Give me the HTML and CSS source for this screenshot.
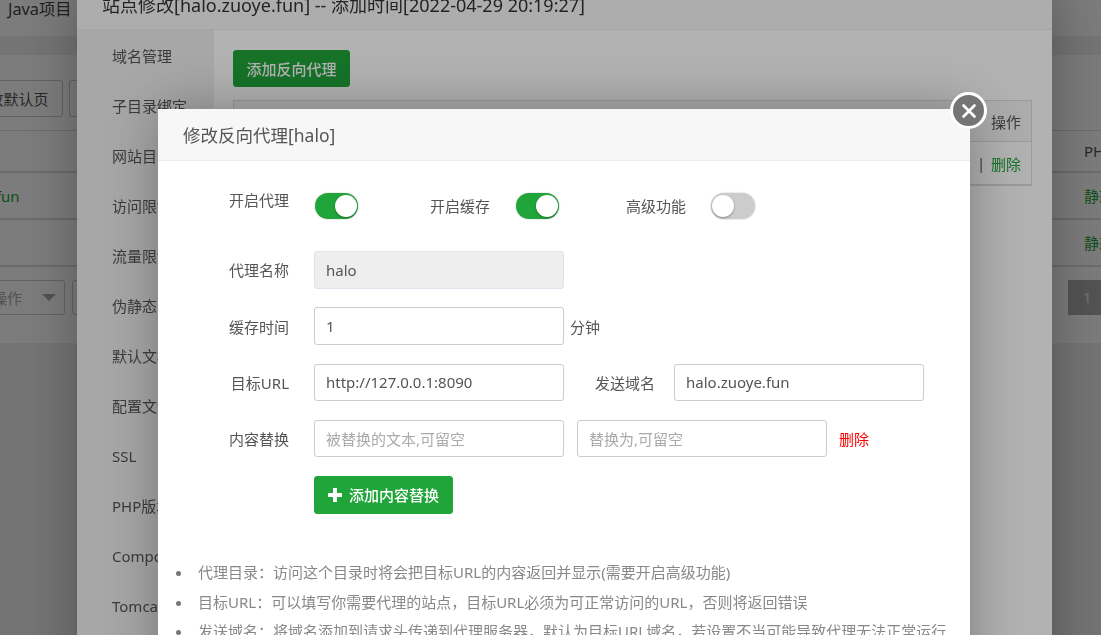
FILE: index.html
```html
<!DOCTYPE html>
<html lang="zh-CN">
<head>
<meta charset="utf-8">
<title>修改反向代理</title>
<link rel="stylesheet" href="styles.css">
</head>
<body>
<div class="page">
  <nav class="topnav"><span>Java项目</span></nav>
  <main class="card">
    <div class="toolbar">
      <button class="btn btn-first">修改默认页</button>
      <button class="btn btn-next"></button>
    </div>
    <div class="row row-head"><span></span><span class="col-end">PHP</span></div>
    <div class="row"><span class="site">halo.zuoye.fun</span><span class="col-end link">静态</span></div>
    <div class="row row-short"><span></span><span class="col-end link">静态</span></div>
    <div class="footbar">
      <div class="select"><span>批量操作</span><i class="caret"></i></div>
      <div class="select select-next"></div>
      <div class="pager">1</div>
    </div>
  </main>
</div>
<div class="shade"></div>
<section class="layer-site">
  <header class="site-title">站点修改[halo.zuoye.fun] -- 添加时间[2022-04-29 20:19:27]</header>
  <div class="site-body">
    <ul class="site-menu">
      <li>域名管理</li><li>子目录绑定</li><li>网站目录</li><li>访问限制</li><li>流量限制</li><li>伪静态</li><li>默认文档</li><li>配置文件</li><li>SSL</li><li>PHP版本</li><li>Composer</li><li>Tomcat</li>
    </ul>
    <div class="site-content">
      <button class="btn-add">添加反向代理</button>
      <div class="proxy-table">
        <div class="proxy-row proxy-head"><span>名称</span><span class="ops">操作</span></div>
        <div class="proxy-row proxy-data"><span>halo</span><span class="ops"><b class="sep">|</b><a class="link">删除</a></span></div>
      </div>
    </div>
  </div>
</section>
<div class="shade shade-top"></div>
<section class="layer-proxy">
  <button class="close" aria-label="关闭">
    <svg viewBox="0 0 16 16" width="16" height="16"><path d="M2.5 2.5 L13.5 13.5 M13.5 2.5 L2.5 13.5" stroke="#fff" stroke-width="2.6" stroke-linecap="round" fill="none"/></svg>
  </button>
  <header class="proxy-title">修改反向代理[halo]</header>
  <div class="proxy-body">
    <div class="switches">
      <span class="label">开启代理</span>
      <span class="switch on"></span>
      <span class="label-b">开启缓存</span>
      <span class="switch on"></span>
      <span class="label-c">高级功能</span>
      <span class="switch"></span>
    </div>
    <div class="form">
      <div class="field"><span class="label">代理名称</span><input class="input" value="halo" disabled></div>
      <div class="field"><span class="label">缓存时间</span><input class="input" value="1"><span class="unit">分钟</span></div>
      <div class="field"><span class="label">目标URL</span><input class="input" value="http://127.0.0.1:8090"><span class="label-d">发送域名</span><input class="input" value="halo.zuoye.fun"></div>
      <div class="field"><span class="label">内容替换</span><input class="input" placeholder="被替换的文本,可留空"><input class="input input-gap" placeholder="替换为,可留空"><a class="remove">删除</a></div>
      <div class="field"><span class="label"></span>
        <button class="btn-replace"><svg viewBox="0 0 16 16" width="16" height="16"><path d="M6 1h4v5h5v4h-5v5H6v-5H1V6h5z" fill="#fff"/></svg>添加内容替换</button>
      </div>
    </div>
    <ul class="tips">
      <li>代理目录：访问这个目录时将会把目标URL的内容返回并显示(需要开启高级功能)</li>
      <li>目标URL：可以填写你需要代理的站点，目标URL必须为可正常访问的URL，否则将返回错误</li>
      <li>发送域名：将域名添加到请求头传递到代理服务器，默认为目标URL域名，若设置不当可能导致代理无法正常运行</li>
    </ul>
  </div>
</section>
</body>
</html>
```
FILE: styles.css
```css
* { box-sizing: border-box; }
html, body { margin: 0; height: 635px; overflow: hidden; }
body {
  background: #f0f0f0;
  color: #555;
  font-family: "Noto Sans", "Noto Sans CJK SC", sans-serif;
  font-size: 15px;
}
ul { margin: 0; padding: 0; list-style: none; }
button { font: inherit; cursor: pointer; }

/* Page under the dialogs */
.topnav {
  height: 36px;
  background: #fff;
  padding-left: 8px;
  line-height: 18px;
  font-size: 16.25px;
  color: #444;
}
.topnav span { display: block; }
.card {
  margin-top: 19px;
  height: 288px;
  background: #fff;
}
.toolbar { display: flex; gap: 6px; padding-top: 25px; height: 75px; }
.btn {
  height: 37px;
  border: 1px solid #ccc;
  border-radius: 3px;
  background: #fff;
  color: #555;
  padding: 0;
  white-space: nowrap;
}
.btn-first { width: 104px; margin-left: -41px; }
.btn-next { width: 40px; }
.row {
  display: grid;
  grid-template-columns: 1fr 17px;
  height: 47px;
  align-items: center;
  border-bottom: 2px solid #ddd;
}
.row-head { height: 43px; border-top: 1px solid #ddd; }
.row-short { height: 47px; }
.site { color: #20a53a; margin-left: -84px; }
.col-end { white-space: nowrap; overflow: hidden; }
.link { color: #20a53a; }
.footbar { display: flex; gap: 7px; padding-top: 13px; height: 48px; }
.select {
  flex: none;
  width: 105px;
  height: 35px;
  margin-left: -40px;
  border: 1px solid #ccc;
  border-radius: 3px;
  display: flex;
  align-items: center;
  gap: 20px;
  padding-left: 1px;
  color: #aaa;
  white-space: nowrap;
}
.select-next { margin-left: 0; width: 40px; }
.caret {
  width: 0;
  height: 0;
  border-left: 7px solid transparent;
  border-right: 7px solid transparent;
  border-top: 7px solid #aaa;
}
.pager {
  margin-left: auto;
  width: 33px;
  height: 35px;
  background: #adadad;
  color: #eee;
  line-height: 35px;
  padding-left: 15px;
}

/* Modal shades */
.shade { position: fixed; inset: 0; background: rgba(0, 0, 0, .3); z-index: 1; }
.shade-top { z-index: 3; }

/* Site settings dialog */
.layer-site {
  position: absolute;
  z-index: 2;
  left: 77px;
  top: -12px;
  width: 975px;
  height: 700px;
  background: #fff;
  box-shadow: 1px 1px 50px rgba(0, 0, 0, .3);
}
.site-title {
  height: 42px;
  line-height: 34px;
  padding-left: 25px;
  font-size: 18px;
  color: #333;
  background: #f8f8f8;
  border-bottom: 1px solid #eee;
  white-space: nowrap;
}
.site-body { display: flex; height: 658px; }
.site-menu { width: 137px; background: #f0f0f0; padding-top: 1px; }
.site-menu li { height: 50px; line-height: 50px; padding-left: 35px; color: #555; white-space: nowrap; }
.site-content { flex: 1; padding: 20px 20px 0 19px; }
.btn-add {
  display: block;
  width: 117px;
  height: 37px;
  padding: 0;
  border: 1px solid #20a53a;
  border-radius: 3px;
  background: #20a53a;
  color: #fff;
  font-weight: 500;
}
.proxy-table { margin-top: 13px; border: 1px solid #ddd; border-bottom: 2px solid #ddd; }
.proxy-row { display: flex; justify-content: space-between; align-items: center; padding-left: 12px; }
.proxy-head { height: 41px; background: #f6f6f6; border-bottom: 1px solid #ddd; }
.proxy-data { height: 42px; }
.ops { width: 52px; position: relative; white-space: nowrap; text-align: right; padding-right: 10px; }
.sep { position: absolute; left: -2px; font-weight: 400; }

/* Reverse proxy dialog */
.layer-proxy {
  position: absolute;
  z-index: 4;
  left: 158px;
  top: 109px;
  width: 812px;
  height: 600px;
  background: #fff;
  box-shadow: 1px 1px 50px rgba(0, 0, 0, .3);
}
.close {
  position: absolute;
  right: -17px;
  top: -17px;
  width: 37px;
  height: 37px;
  border: 3px solid #fff;
  border-radius: 50%;
  background: #757575;
  padding: 0;
  display: flex;
  align-items: center;
  justify-content: center;
}
.proxy-title {
  height: 52px;
  line-height: 52px;
  padding-left: 25px;
  font-size: 17.5px;
  color: #555;
  background: #f7f7f7;
  border-bottom: 1px solid #eee;
}
.proxy-body { padding-top: 32px; }
.switches { display: flex; align-items: center; height: 26px; }
.label { width: 131px; margin-right: 25px; text-align: right; flex: none; color: #555; }
.switches .label { margin-top: -14px; }
.label-b { margin-left: 73px; margin-right: 25px; margin-top: -2px; }
.label-c { margin-left: 68px; margin-right: 24px; margin-top: -2px; }
.switch {
  position: relative;
  flex: none;
  width: 43px;
  height: 26px;
  border-radius: 13px;
  background: #ccc;
  box-shadow: 0 0 2px rgba(0, 0, 0, .25);
  margin-left: 1px;
  margin-right: -1px;
}
.switch:last-child { width: 44px; }
.switch::after {
  content: "";
  position: absolute;
  left: 1px;
  top: 2px;
  width: 22px;
  height: 22px;
  border-radius: 50%;
  background: #fff;
  box-shadow: 0 1px 2px rgba(0, 0, 0, .35);
}
.switch.on { background: #20a53a; }
.switch.on::after { left: 20px; }
.form { display: flex; flex-direction: column; gap: 18.75px; margin-top: 32px; }
.field { display: flex; align-items: center; height: 37.5px; }
.input {
  flex: none;
  width: 250px;
  height: 37.5px;
  padding: 0 11px;
  border: 1px solid #ccc;
  border-radius: 3px;
  background: #fff;
  color: #555;
  font: inherit;
  outline: none;
}
.input:disabled { background: #eee; border-color: #e2e2ee; color: #555; }
.input::placeholder { color: #aaa; opacity: 1; }
.input-gap { margin-left: 13px; }
.unit { margin-left: 6px; }
.label-d { margin-left: 31px; margin-right: 19px; }
.remove { margin-left: 12px; color: #f00; }
.btn-replace {
  display: flex;
  align-items: center;
  gap: 6px;
  width: 139px;
  height: 37.5px;
  padding: 0 0 0 12px;
  border: 1px solid #20a53a;
  border-radius: 3px;
  background: #20a53a;
  color: #fff;
  font-weight: 500;
}
.tips { margin-top: 44.5px; padding-left: 40px; color: #888; }
.tips li { position: relative; height: 29.5px; line-height: 29.5px; white-space: nowrap; }
.tips li::before {
  content: "";
  position: absolute;
  left: -22px;
  top: 13px;
  width: 5px;
  height: 5px;
  border-radius: 50%;
  background: #777;
}
```
